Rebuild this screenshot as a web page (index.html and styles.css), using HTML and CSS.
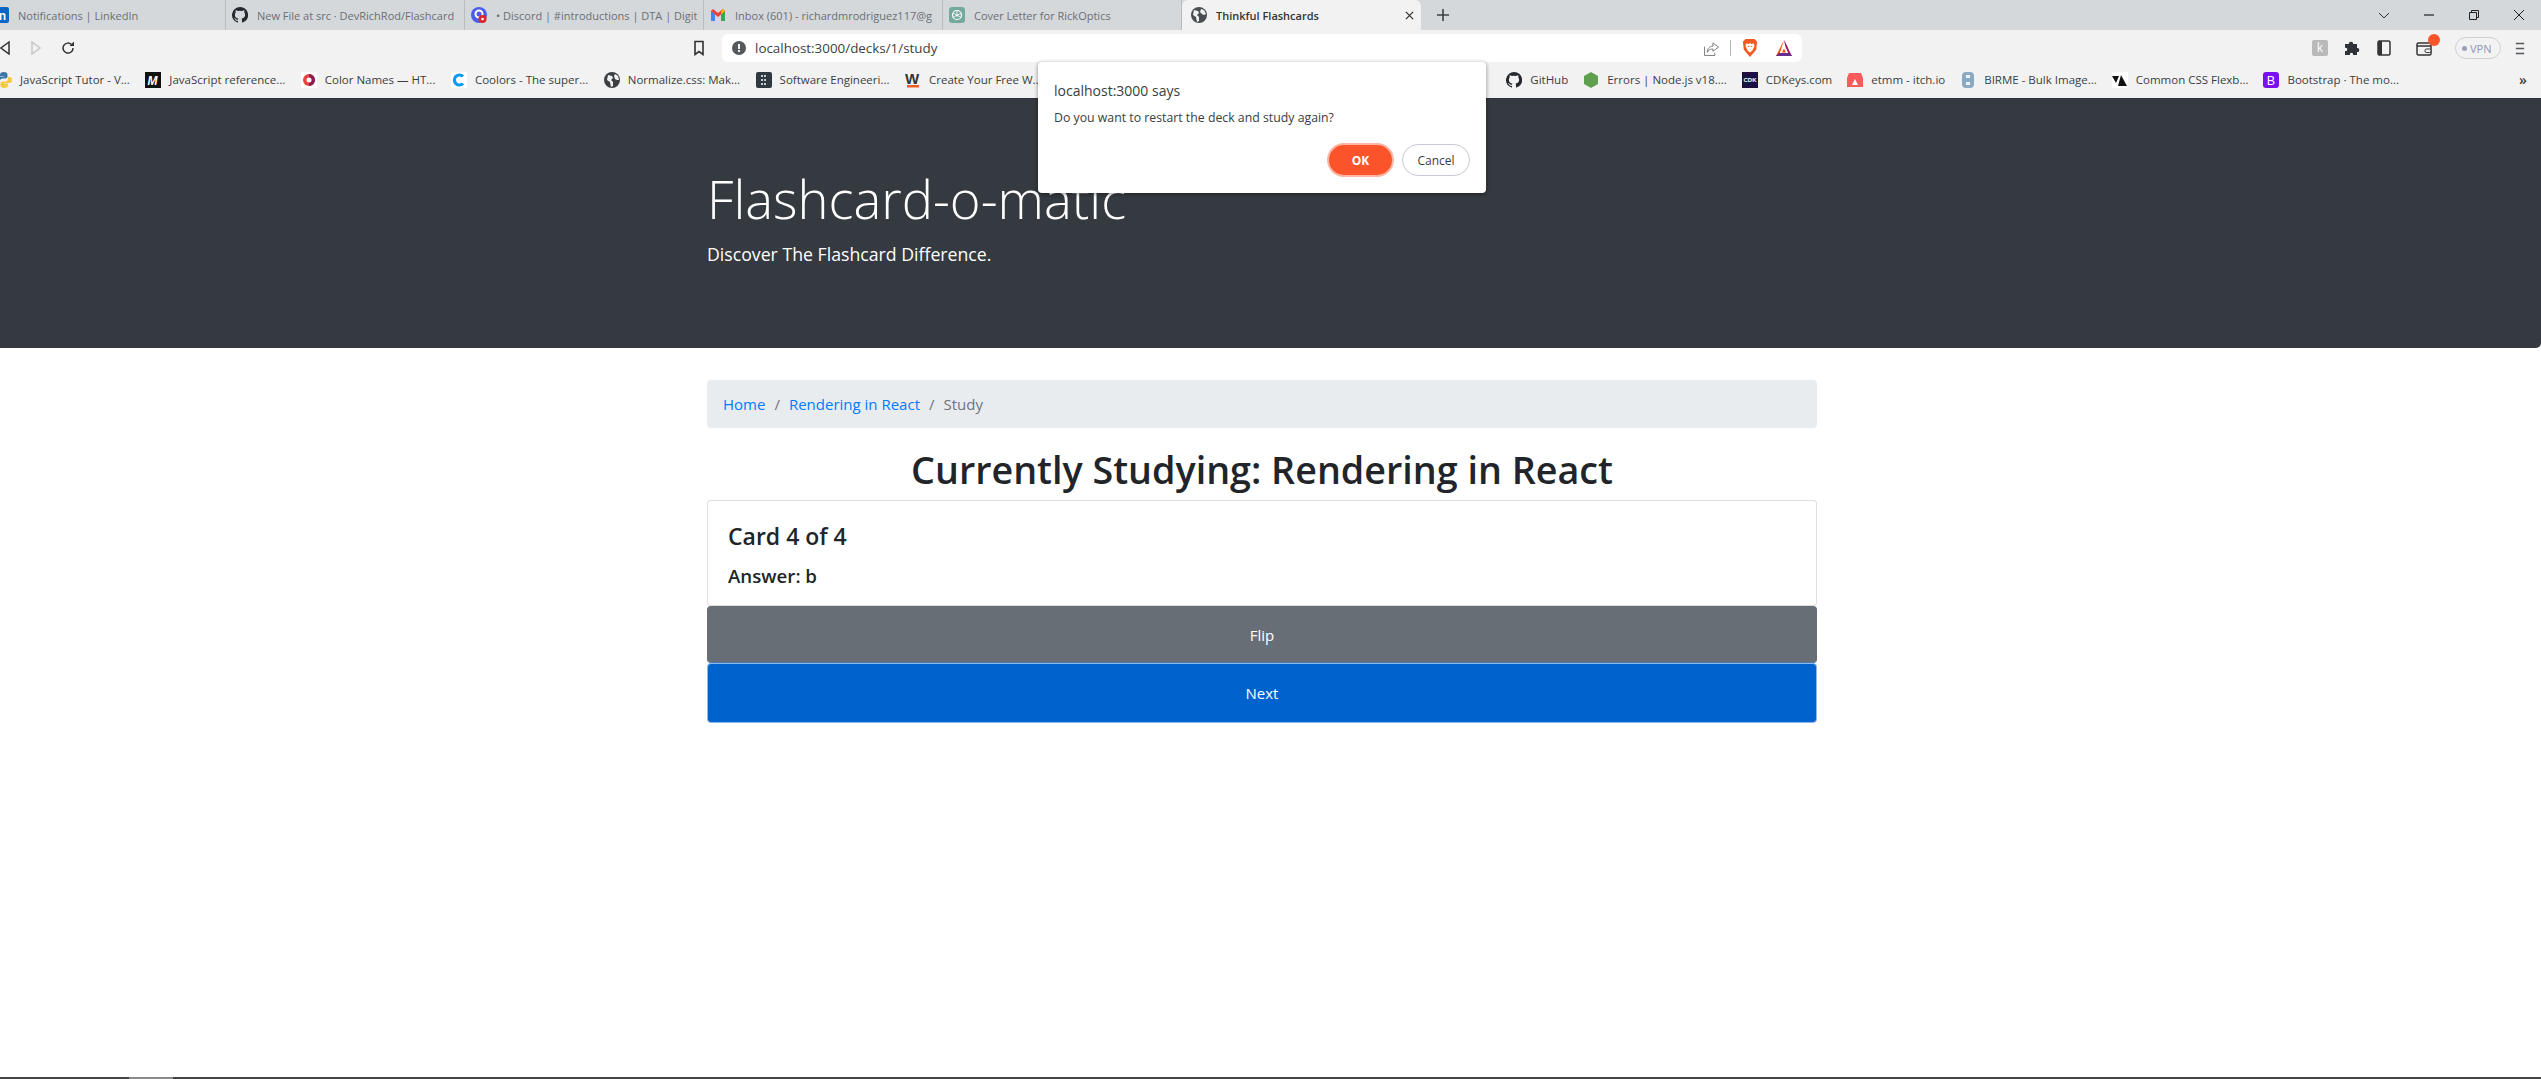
FILE: index.html
```html
<!DOCTYPE html>
<html lang="en">

<head>
    <meta charset="UTF-8">
    <title>Thinkful Flashcards</title>
    <link rel="stylesheet" href="styles.css">
</head>

<body>
    <div class="browser">
        <div class="tab-strip">
            <div class="tabs">
                <div class="tab">
                    <svg class="favicon" viewBox="0 0 16 16"><rect width="16" height="16" rx="2" fill="#0a66c2"/><text x="2.500" y="12.500" font-family="Liberation Sans" font-size="12" font-weight="700" fill="#fff">in</text></svg>
                    <span class="tab-title">Notifications | LinkedIn</span>
                </div>
                <div class="tab">
                    <svg class="favicon" viewBox="0 0 16 16"><path fill="#24292f" d="M8 0a8 8 0 0 0-2.500 15.600c.4.100.5-.2.500-.4v-1.400c-2.200.5-2.700-1-2.700-1-.4-.9-.9-1.200-.9-1.200-.7-.5.100-.5.100-.5.8.100 1.200.8 1.200.8.700 1.200 1.900.9 2.300.7.100-.5.300-.9.500-1.100-1.800-.2-3.600-.9-3.600-4 0-.9.300-1.600.8-2.100-.1-.2-.4-1 .1-2.100 0 0 .7-.2 2.200.8a7.600 7.600 0 0 1 4 0c1.500-1 2.200-.8 2.200-.8.400 1.100.2 1.900.1 2.100.5.500.8 1.200.8 2.100 0 3.100-1.900 3.800-3.700 4 .3.300.6.800.6 1.500v2.200c0 .2.100.5.600.4A8 8 0 0 0 8 0z"/></svg>
                    <span class="tab-title">New File at src · DevRichRod/Flashcard</span>
                </div>
                <div class="tab">
                    <svg class="favicon" viewBox="0 0 16 16"><circle cx="8" cy="8" r="8" fill="#4a5ce8"/><circle cx="8" cy="7" r="3.500" fill="none" stroke="#fff" stroke-width="2"/><circle cx="11.500" cy="12" r="4" fill="#e0242c"/><circle cx="11.500" cy="12" r="1.300" fill="#fff"/></svg>
                    <span class="tab-title">• Discord | #introductions | DTA | Digit</span>
                </div>
                <div class="tab">
                    <svg class="favicon" viewBox="0 0 16 16"><path d="M1 14V4l2-1 2 2v9z" fill="#4285f4"/><path d="M15 14V4l-2-1-2 2v9z" fill="#34a853"/><path d="M1 4l7 6 7-6-2-2-5 4-5-4z" fill="#ea4335"/><path d="M13 2l2 2-4 3.500V5z" fill="#fbbc04"/></svg>
                    <span class="tab-title">Inbox (601) - richardmrodriguez117@g</span>
                </div>
                <div class="tab">
                    <svg class="favicon" viewBox="0 0 16 16"><rect width="16" height="16" rx="3" fill="#74aa9c"/><circle cx="8" cy="8" r="4.500" fill="none" stroke="#fff" stroke-width="1.200"/><path d="M8 3.500v6M4 6l5 3M12 6L7 9M4 10.500l4-2.500M12 10.500L8 8" stroke="#fff" stroke-width=".8"/></svg>
                    <span class="tab-title">Cover Letter for RickOptics</span>
                </div>
                <div class="tab tab-active">
                    <svg class="favicon" viewBox="0 0 16 16"><circle cx="8" cy="8" r="8" fill="#4a4d51"/><path d="M3 3l4 1 1 2-2 2 2 2v4l-2 1-1-5-3-2zM10 2l3 1 2 4-2 1-2-1-2-2z" fill="#f2f2f2"/></svg>
                    <span class="tab-title">Thinkful Flashcards</span>
                    <svg class="tab-close" viewBox="0 0 10 10"><path d="M1 1l8 8M9 1L1 9" stroke="#333" stroke-width="1.400"/></svg>
                </div>
                <svg class="tab-new" viewBox="0 0 12 12"><path d="M6 0v12M0 6h12" stroke="#3c4043" stroke-width="1.600"/></svg>
            </div>
            <div class="window-controls">
                <svg viewBox="0 0 12 12"><path d="M1 4l5 5 5-5" fill="none" stroke="#333"/></svg>
                <svg viewBox="0 0 12 12"><path d="M1 6h10" stroke="#222" stroke-width="1.200"/></svg>
                <svg viewBox="0 0 12 12"><path d="M1.500 3.500h7v7h-7zM3.500 3.500v-2h7v7h-2" fill="none" stroke="#222"/></svg>
                <svg viewBox="0 0 12 12"><path d="M1 1l10 10M11 1L1 11" stroke="#222"/></svg>
            </div>
        </div>

        <div class="toolbar">
            <div class="nav-buttons">
                <svg viewBox="0 0 12 14"><path d="M10 1L2 7l8 6z" fill="none" stroke="#333" stroke-width="1.500"/></svg>
                <svg viewBox="0 0 12 14"><path d="M2 1l8 6-8 6z" fill="none" stroke="#c4c6c8" stroke-width="1.500"/></svg>
                <svg class="nav-reload" viewBox="0 0 14 14"><path d="M12 7a5 5 0 1 1-1.500-3.500" fill="none" stroke="#333" stroke-width="1.500"/><path d="M13 0.500v4.500H8.500z" fill="#333"/></svg>
            </div>
            <svg class="bookmark-btn" viewBox="0 0 12 16"><path d="M2 1.500h8v13l-4-3-4 3z" fill="none" stroke="#333" stroke-width="1.600"/></svg>
            <div class="omnibox">
                <svg class="omni-warn" viewBox="0 0 14 14"><circle cx="7" cy="7" r="7" fill="#55595e"/><rect x="6" y="3" width="2" height="5" fill="#f2f2f2"/><rect x="6" y="9" width="2" height="2" fill="#f2f2f2"/></svg>
                <span class="omni-url">localhost:3000/decks/1/study</span>
                <div class="omni-right">
                    <svg class="omni-share" viewBox="0 0 16 16"><path d="M9.500 2l6 4.500-6 4.500V8.500C6 8.500 4.500 10 3.500 12c0-3.500 2-6.500 6-6.500z M.5 6v9.500h11V12.500" fill="none" stroke="#777" stroke-width="1"/></svg>
                    <span class="omni-divider"></span>
                    <svg class="omni-brave" viewBox="0 0 18 20"><path d="M4 0h10l3 3-1 9-7 8-7-8-1-9z" fill="#f15a22"/><path d="M4.500 5l3 .5L9 4.500l1.500 1 3-.5.500 3-2.500 5L9 15l-2.500-2-2.500-5z" fill="#fff"/><path d="M6.500 8l2 .5M11.500 8l-2 .5" stroke="#f15a22"/></svg>
                    <svg class="omni-bat" viewBox="0 0 18 18"><path d="M9 1l4 8-2 1z" fill="#9e1f63"/><path d="M9 1L1 17h3z" fill="#ff5000"/><path d="M9 1l8 16h-3.500z" fill="#9e1f63"/><path d="M1 17h16l-3-3H4z" fill="#662d91"/><path d="M9 6l4 8H5z" fill="#fff"/><path d="M9 9.500l2 4H7z" fill="#ff5000"/></svg>
                </div>
            </div>
            <div class="extensions">
                <span class="ext-k">k</span>
                <svg class="ext-puzzle" viewBox="0 0 16 16"><path d="M1 4h4c-1-3 5-3 4 0h4v4c3-1 3 5 0 4v3H9c1-3-4-3-3 0H1v-4c3 1 3-4 0-3z" fill="#2f3236"/></svg>
                <svg class="ext-sidebar" viewBox="0 0 14 16"><rect x="1" y="1" width="12" height="14" rx="1.500" fill="none" stroke="#333" stroke-width="1.500"/><rect x="1" y="1" width="4" height="14" fill="#333"/></svg>
                <div class="ext-wallet">
                    <svg viewBox="0 0 16 16"><rect x="1" y="3" width="14" height="12" rx="1.500" fill="none" stroke="#333" stroke-width="1.500"/><path d="M1 6h14" stroke="#333" stroke-width="1.500"/><rect x="9" y="9" width="6" height="3.500" rx="1.500" fill="#f2f2f2" stroke="#333"/></svg>
                    <span class="wallet-badge"></span>
                </div>
                <div class="vpn-pill"><span class="vpn-dot"></span>VPN</div>
                <svg class="ext-menu" viewBox="0 0 12 16"><path d="M1 2h10M1 8h10M1 14h10" stroke="#55585c" stroke-width="1.800"/></svg>
            </div>
        </div>

        <div class="bookmarks">
            <div class="bookmark-group">
                <div class="bookmark">
                    <svg class="favicon" viewBox="0 0 16 16"><path d="M8 0c-3 0-4 1-4 3v1.500h4.200V5H2.500C1 5 0 6 0 8s1 3 2.500 3H4V9c0-1.500 1-2.500 2.500-2.500h3c1 0 2-1 2-2V3c0-2-1-3-3.500-3z" fill="#3a76a8"/><path d="M8 16c3 0 4-1 4-3v-1.500H7.800V11h5.700c1.500 0 2.500-1 2.500-3s-1-3-2.500-3H12v2c0 1.500-1 2.500-2.500 2.500h-3c-1 0-2 1-2 2V13c0 2 1 3 3.500 3z" fill="#f5c93c"/></svg>
                    <span>JavaScript Tutor - V...</span>
                </div>
                <div class="bookmark">
                    <svg class="favicon" viewBox="0 0 16 16"><rect width="16" height="16" fill="#111"/><text x="2.500" y="12.500" font-family="Liberation Sans" font-size="12" font-style="italic" font-weight="700" fill="#fff">M</text></svg>
                    <span>JavaScript reference...</span>
                </div>
                <div class="bookmark">
                    <svg class="favicon" viewBox="0 0 16 16"><rect width="16" height="16" fill="#fff"/><circle cx="8" cy="8" r="6" fill="#e8453c"/><path d="M8 2a6 6 0 0 1 0 12z" fill="#8e1d4f"/><circle cx="8" cy="8" r="2.500" fill="#fff"/></svg>
                    <span>Color Names — HT...</span>
                </div>
                <div class="bookmark">
                    <svg class="favicon" viewBox="0 0 16 16"><rect width="16" height="16" fill="#fff"/><path d="M12 4.500a5 5 0 1 0 0 7" fill="none" stroke="#0a9cf5" stroke-width="3.200"/></svg>
                    <span>Coolors - The super...</span>
                </div>
                <div class="bookmark">
                    <svg class="favicon" viewBox="0 0 16 16"><circle cx="8" cy="8" r="8" fill="#3c4043"/><path d="M4 3l4 1 1 2-2 2 2 2v4l-2 1-1-5-3-2zM11 2l3 2 1 4-2 0-2-1-1-3z" fill="#f2f2f2"/></svg>
                    <span>Normalize.css: Mak...</span>
                </div>
                <div class="bookmark">
                    <svg class="favicon" viewBox="0 0 16 16"><rect width="16" height="16" rx="2" fill="#2f3a40"/><path d="M5 4h6M5 8h6M5 12h6" stroke="#fff" stroke-width="1.500" stroke-dasharray="2 1"/></svg>
                    <span>Software Engineeri...</span>
                </div>
                <div class="bookmark">
                    <svg class="favicon" viewBox="0 0 16 16"><text x="0" y="12" font-family="Liberation Sans" font-size="15" font-weight="700" fill="#333">W</text><rect x="2" y="13" width="12" height="2.500" fill="#f15a22"/></svg>
                    <span>Create Your Free W...</span>
                </div>
            </div>
            <div class="bookmark-group bookmark-group-right">
                <div class="bookmark">
                    <svg class="favicon" viewBox="0 0 16 16"><path fill="#24292f" d="M8 0a8 8 0 0 0-2.500 15.600c.4.100.5-.2.500-.4v-1.400c-2.200.5-2.700-1-2.700-1-.4-.9-.9-1.200-.9-1.200-.7-.5.100-.5.100-.5.8.100 1.200.8 1.200.8.700 1.200 1.900.9 2.300.7.100-.5.300-.9.500-1.100-1.800-.2-3.600-.9-3.600-4 0-.9.300-1.600.8-2.100-.1-.2-.4-1 .1-2.100 0 0 .7-.2 2.200.8a7.600 7.600 0 0 1 4 0c1.500-1 2.200-.8 2.200-.8.400 1.100.2 1.900.1 2.100.5.500.8 1.200.8 2.100 0 3.100-1.900 3.800-3.700 4 .3.300.6.800.6 1.500v2.200c0 .2.100.5.600.4A8 8 0 0 0 8 0z"/></svg>
                    <span>GitHub</span>
                </div>
                <div class="bookmark">
                    <svg class="favicon" viewBox="0 0 16 16"><path d="M8 0l7 4v8l-7 4-7-4V4z" fill="#5fa04e"/></svg>
                    <span>Errors | Node.js v18....</span>
                </div>
                <div class="bookmark">
                    <svg class="favicon" viewBox="0 0 16 16"><rect width="16" height="16" fill="#1b1140"/><text x="8" y="10" text-anchor="middle" font-family="Liberation Sans" font-size="6" font-weight="700" fill="#fff">CDK</text></svg>
                    <span>CDKeys.com</span>
                </div>
                <div class="bookmark">
                    <svg class="favicon" viewBox="0 0 16 16"><path d="M2 1h12l2 5v9H0V6z" fill="#fa5c5c"/><path d="M5 13l3-6 3 6z" fill="#fff"/></svg>
                    <span>etmm - itch.io</span>
                </div>
                <div class="bookmark">
                    <svg class="favicon" viewBox="0 0 16 16"><rect x="2" width="12" height="16" rx="4" fill="#8aaac4"/><rect x="6" y="3" width="4" height="3" fill="#f2f2f2"/><rect x="6" y="10" width="4" height="3" fill="#f2f2f2"/></svg>
                    <span>BIRME - Bulk Image...</span>
                </div>
                <div class="bookmark">
                    <svg class="favicon" viewBox="0 0 16 16"><rect width="16" height="16" fill="#fff"/><path d="M0 4h7l-3 7zM9 3l6 11H6z" fill="#111"/></svg>
                    <span>Common CSS Flexb...</span>
                </div>
                <div class="bookmark">
                    <svg class="favicon" viewBox="0 0 16 16"><rect width="16" height="16" rx="3" fill="#7a10f2"/><text x="8" y="12.500" text-anchor="middle" font-family="Liberation Sans" font-size="12.500" fill="#fff">B</text></svg>
                    <span>Bootstrap · The mo...</span>
                </div>
            </div>
            <span class="bookmark-more">»</span>
        </div>
    </div>

    <header class="jumbotron">
        <div class="container">
            <h1>Flashcard-o-matic</h1>
            <p class="lead">Discover The Flashcard Difference.</p>
        </div>
    </header>

    <main class="container study">
        <nav class="breadcrumb">
            <a href="#">Home</a>
            <span class="crumb-sep">/</span>
            <a href="#">Rendering in React</a>
            <span class="crumb-sep">/</span>
            <span class="crumb-current">Study</span>
        </nav>
        <h2 class="study-title">Currently Studying: Rendering in React</h2>
        <div class="card">
            <h5 class="card-title">Card 4 of 4</h5>
            <h6 class="card-answer">Answer: b</h6>
        </div>
        <button class="btn btn-flip">Flip</button>
        <button class="btn btn-next">Next</button>
    </main>

    <div class="page-edge"><span></span></div>

    <div class="alert-dialog">
        <p class="alert-origin">localhost:3000 says</p>
        <p class="alert-message">Do you want to restart the deck and study again?</p>
        <div class="alert-actions">
            <button class="alert-ok">OK</button>
            <button class="alert-cancel">Cancel</button>
        </div>
    </div>
</body>

</html>
```

FILE: styles.css
```css
* {
    box-sizing: border-box;
}

html,
body {
    height: 100%;
}

body {
    margin: 0;
    display: flex;
    flex-direction: column;
    overflow: hidden;
    font-family: "Open Sans", "Noto Sans", sans-serif;
    color: #212529;
    background-color: #fff;
}

svg {
    display: block;
    flex: none;
}

.browser {
    font-size: 11.500px;
}

.tab-strip {
    display: flex;
    justify-content: space-between;
    height: 30px;
    background-color: #d5d8db;
}

.tabs {
    display: flex;
    align-items: center;
    margin-left: -13px;
}

.tab {
    display: flex;
    align-items: center;
    gap: 9px;
    width: 239px;
    height: 30px;
    padding-left: 6px;
    padding-right: 4px;
    font-size: 11px;
    color: #6b6f74;
    box-shadow: inset -1px 0 0 #b9bcbf;
}

.tab-title {
    flex: 1;
    overflow: hidden;
    white-space: nowrap;
}

.favicon {
    width: 16px;
    height: 16px;
}

.tab-active {
    padding-left: 9px;
    padding-right: 6px;
    color: #333;
    font-weight: 600;
    background-color: #f2f2f2;
    border-radius: 6px 6px 0 0;
    box-shadow: none;
}

.tab-close {
    width: 9px;
    height: 9px;
    margin-right: 1px;
}

.tab-new {
    width: 12px;
    height: 12px;
    margin-left: 16px;
}

.window-controls {
    display: flex;
    align-items: center;
    gap: 33px;
    padding-right: 16px;
}

.window-controls svg {
    width: 12px;
    height: 12px;
}

.toolbar {
    display: flex;
    height: 32px;
    padding-top: 4px;
    background-color: #f2f2f2;
}

.nav-buttons {
    display: flex;
    align-items: center;
    gap: 19px;
    width: 694px;
    margin-left: -1px;
}

.nav-buttons svg {
    width: 12px;
    height: 14px;
}

.nav-buttons .nav-reload {
    width: 14px;
}

.bookmark-btn {
    width: 12px;
    height: 16px;
    margin: 6px 17px 0 0;
}

.omnibox {
    display: flex;
    align-items: center;
    width: 1080px;
    height: 28px;
    padding-left: 10px;
    padding-right: 9px;
    font-size: 13.400px;
    color: #3c4043;
    background-color: #fff;
    border-radius: 6px;
}

.omni-warn {
    width: 14px;
    height: 14px;
}

.omni-url {
    margin-left: 9px;
}

.omni-right {
    display: flex;
    align-items: center;
    margin-left: auto;
}

.omni-share {
    width: 15px;
    height: 15px;
}

.omni-divider {
    width: 1px;
    height: 16px;
    margin: 0 11px;
    background-color: #b8b8b8;
}

.omni-brave {
    width: 16px;
    height: 18px;
}

.omni-bat {
    width: 18px;
    height: 18px;
    margin-left: 17px;
}

.extensions {
    display: flex;
    align-items: center;
    flex: 1;
    padding-left: 510px;
}

.ext-k {
    width: 16px;
    height: 16px;
    font-size: 12px;
    line-height: 15px;
    text-align: center;
    color: #fff;
    background-color: #b9b9b9;
    border-radius: 2px;
}

.ext-puzzle {
    width: 16px;
    height: 16px;
    margin-left: 16px;
}

.ext-sidebar {
    width: 14px;
    height: 16px;
    margin-left: 17px;
}

.ext-wallet {
    position: relative;
    width: 16px;
    height: 16px;
    margin-left: 25px;
}

.wallet-badge {
    position: absolute;
    top: -6px;
    right: -8px;
    width: 12px;
    height: 12px;
    background-color: #fb542b;
    border-radius: 50%;
}

.vpn-pill {
    display: flex;
    align-items: center;
    gap: 3px;
    flex: none;
    width: 46px;
    height: 22px;
    margin-left: 23px;
    padding-left: 6px;
    font-size: 11px;
    color: #8a9ab5;
    border: 1px solid #cfd0d2;
    border-radius: 11px;
}

.vpn-dot {
    width: 5px;
    height: 5px;
    background-color: #9aa0b5;
    border-radius: 50%;
}

.ext-menu {
    width: 10px;
    height: 15px;
    margin-left: 14px;
}

.bookmarks {
    display: flex;
    align-items: center;
    height: 37px;
    padding-bottom: 1px;
    background-color: #f2f2f2;
    border-bottom: 1px solid #2f3236;
    color: #3a3d40;
}

.bookmark-group {
    display: flex;
    gap: 15.500px;
    margin-left: -4px;
}

.bookmark-group-right {
    gap: 15px;
    margin-left: auto;
}

.bookmark {
    display: flex;
    align-items: center;
    gap: 8px;
    white-space: nowrap;
}

.bookmark-more {
    width: 22px;
    margin-left: 120px;
    font-size: 14px;
    font-weight: 600;
}

.jumbotron {
    height: 249px;
    padding-top: 69px;
    color: #fff;
    background-color: #343a40;
    border-radius: 0 0 5px 0;
}

.container {
    width: 1110px;
    margin-left: 707px;
}

.jumbotron h1 {
    margin: 0 0 10px;
    font-size: 52.500px;
    font-weight: 300;
    line-height: 62px;
}

.lead {
    margin: 0;
    font-size: 17.700px;
    font-weight: 400;
    line-height: 28px;
}

.study {
    flex: 1;
    padding-top: 32px;
}

.breadcrumb {
    display: flex;
    gap: 9px;
    height: 48px;
    align-items: center;
    padding: 0 16px;
    font-size: 15px;
    background-color: #e9ecef;
    border-radius: 4px;
}

.breadcrumb a {
    color: #007bff;
    text-decoration: none;
}

.crumb-sep,
.crumb-current {
    color: #6c757d;
}

.study-title {
    margin: 14px 0 2px;
    font-size: 37.700px;
    font-weight: 600;
    line-height: 56px;
    text-align: center;
}

.card {
    height: 106px;
    padding: 22px 20px 0;
    background-color: #fff;
    border: 1px solid rgba(0, 0, 0, 0.125);
    border-radius: 4px;
}

.card-title {
    margin: 0 0 15px;
    font-size: 23px;
    font-weight: 600;
    line-height: 27px;
}

.card-answer {
    margin: 0;
    font-size: 18.700px;
    font-weight: 600;
    line-height: 22px;
}

.btn {
    display: block;
    width: 100%;
    padding: 0;
    font-family: inherit;
    font-size: 15px;
    color: #fff;
    border-radius: 4px;
}

.btn-flip {
    height: 57px;
    background-color: #676e76;
    border: 1px solid #676e76;
    border-bottom-color: #4a7db8;
}

.btn-next {
    height: 60px;
    background-color: #0062cc;
    border: 1px solid #8db8ea;
}

.page-edge {
    height: 2px;
    background-color: #444;
}

.page-edge span {
    display: block;
    width: 44px;
    height: 2px;
    margin-left: 129px;
    background-color: #8a8a8a;
}

.alert-dialog {
    position: absolute;
    top: 62px;
    left: 1038px;
    width: 448px;
    height: 131px;
    padding: 16px;
    background-color: #fff;
    border-radius: 4px;
    box-shadow: 0 1px 4px rgba(0, 0, 0, 0.45);
}

.alert-origin {
    margin: 2px 0 0;
    font-size: 14px;
    line-height: 22px;
    color: #3a3d40;
}

.alert-message {
    margin: 7px 0 0;
    font-size: 12.300px;
    line-height: 18px;
    color: #3a3d40;
}

.alert-actions {
    display: flex;
    justify-content: flex-end;
    align-items: center;
    gap: 10px;
    margin-top: 17px;
}

.alert-actions button {
    padding: 0;
    font-family: inherit;
    font-size: 12px;
    border-radius: 16px;
}

.alert-ok {
    width: 63px;
    height: 30px;
    font-weight: 700;
    color: #fff;
    background-color: #fb542b;
    border: none;
    box-shadow: 0 0 0 2px #ffb5a3;
}

.alert-cancel {
    width: 68px;
    height: 32px;
    color: #3a3d40;
    background-color: #fff;
    border: 1px solid #c9c9d4;
}
```
